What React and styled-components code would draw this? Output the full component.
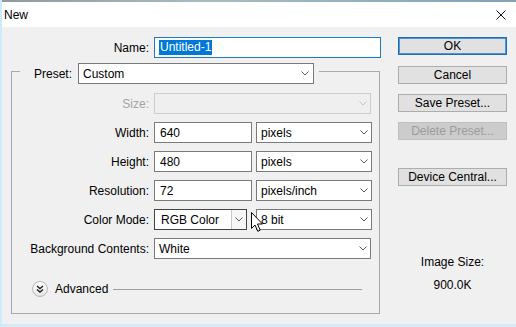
import React from "react";
import styled, { createGlobalStyle } from "styled-components";

const Global = createGlobalStyle`
  html, body { margin: 0; padding: 0; background: #f0f0f0; }
  body { font-family: "Liberation Sans", Arial, sans-serif; font-size: 12px; color: #000; }
  * { box-sizing: border-box; }
`;

const Window = styled.div`
  position: relative;
  width: 516px;
  height: 327px;
  background: #f0f0f0;
  border-left: 2px solid #cfeaf8;
  border-bottom: 3px solid #d6ebf8;
  display: flex;
  flex-direction: column;
  overflow: hidden;
`;

const TopStrip = styled.div`
  height: 2px;
  background: linear-gradient(90deg, #8e9aa0, #a9bcc4 40%, #7fa4b4);
`;

const TitleBar = styled.div`
  height: 25px;
  background: #fff;
  display: flex;
  align-items: center;
  justify-content: space-between;
  padding: 0 10px 0 2px;
  font-size: 12px;
`;

const Body = styled.div`
  display: flex;
  padding-top: 10px;
`;

const LeftPane = styled.div`
  width: 379px;
  display: flex;
  flex-direction: column;
`;

const Row = styled.div`
  display: flex;
  align-items: center;
  height: 21px;
`;

const Label = styled.div`
  width: ${(p) => p.$w}px;
  padding-right: 5px;
  text-align: right;
  white-space: nowrap;
  color: ${(p) => (p.$disabled ? "#a3a3a3" : "#000")};
`;

const Field = styled.div`
  width: ${(p) => p.$w}px;
  height: 21px;
  background: #fff;
  border: 1px solid ${(p) => (p.$focus ? "#1b79c6" : "#7a7a7a")};
  padding-left: ${(p) => (p.$focus ? 4 : 5)}px;
  display: flex;
  align-items: center;
  white-space: nowrap;
`;

const Selected = styled.span`
  background: #0078d7;
  color: #fff;
  line-height: 15px;
  padding: 0 1px;
`;

const SelectBox = styled.div`
  width: ${(p) => p.$w}px;
  height: 21px;
  margin-left: ${(p) => p.$ml || 0}px;
  background: ${(p) => (p.$disabled ? "#efefef" : "#fff")};
  border: 1px solid ${(p) => (p.$disabled ? "#cccccc" : p.$split ? "#444" : "#7a7a7a")};
  display: flex;
  align-items: stretch;
  white-space: nowrap;
`;

const SelectText = styled.div`
  flex: 1;
  display: flex;
  align-items: center;
  padding-left: ${(p) => p.$pl || 4}px;
`;

const ArrowBox = styled.div`
  width: ${(p) => (p.$split ? 15 : 15)}px;
  display: flex;
  align-items: center;
  justify-content: center;
  margin-right: ${(p) => p.$mr || 0}px;
  border-left: ${(p) => (p.$split ? "1px solid #c8c8c8" : "none")};
  background: ${(p) => (p.$split ? "#f6f6f6" : "transparent")};
`;

const Chevron = ({ color = "#5a5a5a" }) => (
  <svg width="8" height="5" viewBox="0 0 8 5">
    <polyline points="0.5,0.5 4,4 7.5,0.5" fill="none" stroke={color} strokeWidth="1" />
  </svg>
);

const Select = ({ w, value, disabled, split, ml, mr }) => (
  <SelectBox $w={w} $disabled={disabled} $split={split} $ml={ml}>
    <SelectText $pl={split ? 6 : 4}>{value}</SelectText>
    <ArrowBox $split={split} $mr={mr}>
      <Chevron color={disabled ? "#c2c2c2" : "#5a5a5a"} />
    </ArrowBox>
  </SelectBox>
);

const Group = styled.fieldset`
  margin: 0 0 0 9px;
  padding: 0;
  width: 369px;
  border: 1px solid #a9a9a9;
  min-width: 0;
`;

const Legend = styled.legend`
  margin-left: 8px;
  padding: 5px 5px 0 14px;
  display: flex;
  align-items: center;
  gap: 6px;
`;

const GroupContent = styled.div`
  padding: 9px 0 16px 0;
  display: flex;
  flex-direction: column;
  gap: 8px;
`;

const AdvancedRow = styled.div`
  display: flex;
  align-items: center;
  height: 16px;
  margin-top: 14px;
  padding-left: 20px;
  padding-right: 17px;
`;

const AdvancedText = styled.span`
  margin-left: 7px;
`;

const Rule = styled.div`
  flex: 1;
  height: 1px;
  background: #a0a0a0;
  margin-left: 5px;
`;

const RightPane = styled.div`
  width: 109px;
  margin-left: 17px;
  display: flex;
  flex-direction: column;
  align-items: center;
`;

const Button = styled.button`
  width: 109px;
  height: 18px;
  margin-top: ${(p) => p.$mt || 0}px;
  padding: 0;
  font-family: "Liberation Sans", Arial, sans-serif;
  font-size: 12px;
  color: ${(p) => (p.disabled ? "#9c9c9c" : "#000")};
  background: ${(p) => (p.disabled ? "#cccccc" : "#e1e1e1")};
  border: 1px solid ${(p) => (p.$primary ? "#1f6db3" : p.disabled ? "#bfbfbf" : "#adadad")};
  box-shadow: ${(p) => (p.$primary ? "inset 0 0 0 1px #4f95d3" : "none")};
  line-height: 16px;
`;

const InfoText = styled.div`
  margin-top: ${(p) => p.$mt}px;
  line-height: 15px;
`;

const CursorLayer = styled.div`
  position: absolute;
  left: 248px;
  top: 211px;
  pointer-events: none;
`;

const ExpandIcon = () => (
  <svg width="16" height="16" viewBox="0 0 16 16">
    <defs>
      <linearGradient id="eg" x1="0" y1="0" x2="0" y2="1">
        <stop offset="0" stopColor="#ffffff" />
        <stop offset="1" stopColor="#e4e4e4" />
      </linearGradient>
    </defs>
    <circle cx="8" cy="8" r="7.5" fill="url(#eg)" stroke="#b9b9b9" />
    <polyline points="5,5 8,7.5 11,5" fill="none" stroke="#222" strokeWidth="1.4" />
    <polyline points="5,8.5 8,11 11,8.5" fill="none" stroke="#222" strokeWidth="1.4" />
  </svg>
);

const CloseIcon = () => (
  <svg width="10" height="10" viewBox="0 0 10 10">
    <line x1="0.5" y1="0.5" x2="9.5" y2="9.5" stroke="#111" strokeWidth="1" />
    <line x1="9.5" y1="0.5" x2="0.5" y2="9.5" stroke="#111" strokeWidth="1" />
  </svg>
);

const Cursor = () => (
  <svg width="14" height="22" viewBox="0 0 14 22">
    <path
      d="M1.5 1.5 L1.5 17.5 L5 14 L7.8 20.3 L10.2 19.2 L7.5 13 L12.5 13 Z"
      fill="#fff"
      stroke="#000"
      strokeWidth="1"
      strokeLinejoin="round"
    />
  </svg>
);

export default function App() {
  return (
    <>
      <Global />
      <Window>
        <TopStrip />
        <TitleBar>
          <span>New</span>
          <CloseIcon />
        </TitleBar>
        <Body>
          <LeftPane>
            <Row>
              <Label $w={152}>Name:</Label>
              <Field $w={227} $focus>
                <Selected>Untitled-1</Selected>
              </Field>
            </Row>
            <Group>
              <Legend>
                <span>Preset:</span>
                <Select w={236} value="Custom" mr={1} />
              </Legend>
              <GroupContent>
                <Row>
                  <Label $w={142} $disabled>Size:</Label>
                  <Select w={217} value="" disabled />
                </Row>
                <Row>
                  <Label $w={142}>Width:</Label>
                  <Field $w={98}>640</Field>
                  <Select w={116} value="pixels" ml={4} />
                </Row>
                <Row>
                  <Label $w={142}>Height:</Label>
                  <Field $w={98}>480</Field>
                  <Select w={116} value="pixels" ml={4} />
                </Row>
                <Row>
                  <Label $w={142}>Resolution:</Label>
                  <Field $w={98}>72</Field>
                  <Select w={116} value="pixels/inch" ml={4} />
                </Row>
                <Row>
                  <Label $w={142}>Color Mode:</Label>
                  <Select w={93} value="RGB Color" split />
                  <Select w={116} value="8 bit" ml={9} />
                </Row>
                <Row>
                  <Label $w={142}>Background Contents:</Label>
                  <Select w={217} value="White" />
                </Row>
                <AdvancedRow>
                  <ExpandIcon />
                  <AdvancedText>Advanced</AdvancedText>
                  <Rule />
                </AdvancedRow>
              </GroupContent>
            </Group>
          </LeftPane>
          <RightPane>
            <Button $primary>OK</Button>
            <Button $mt={11}>Cancel</Button>
            <Button $mt={10}>Save Preset...</Button>
            <Button $mt={10} disabled>Delete Preset...</Button>
            <Button $mt={28}>Device Central...</Button>
            <InfoText $mt={69}>Image Size:</InfoText>
            <InfoText $mt={8}>900.0K</InfoText>
          </RightPane>
        </Body>
        <CursorLayer>
          <Cursor />
        </CursorLayer>
      </Window>
    </>
  );
}
